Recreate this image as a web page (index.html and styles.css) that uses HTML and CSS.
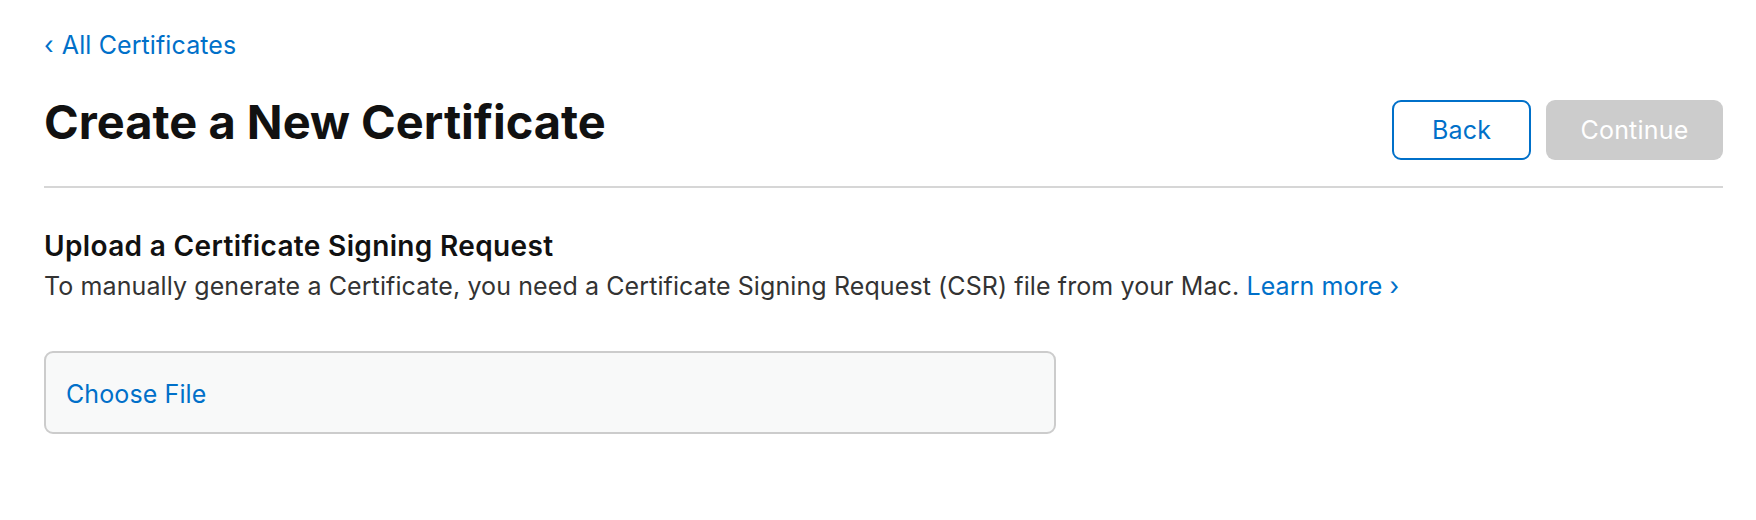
FILE: index.html
```html
<!DOCTYPE html>
<html lang="en">
<head>
<meta charset="utf-8">
<title>Create a New Certificate</title>
<link rel="stylesheet" href="styles.css">
</head>
<body>
<main class="page">
  <nav class="crumb"><a href="#" class="link"><span class="chev">‹</span> All Certificates</a></nav>
  <header class="head">
    <h1 class="title">Create a New Certificate</h1>
    <div class="actions">
      <button class="btn btn-back" type="button">Back</button>
      <button class="btn btn-continue" type="button" disabled>Continue</button>
    </div>
  </header>
  <div class="rule"></div>
  <section class="upload">
    <h2 class="subtitle">Upload a Certificate Signing Request</h2>
    <p class="desc">To manually generate a Certificate, you need a Certificate Signing Request (CSR) file from your Mac. <a href="#" class="link">Learn more ›</a></p>
    <div class="filebox"><span class="link">Choose File</span></div>
  </section>
</main>
</body>
</html>
```
FILE: styles.css
```css
html, body {
  margin: 0;
  padding: 0;
  background: #fff;
}
body {
  font-family: Inter, "Noto Sans", "Liberation Sans", sans-serif;
  color: #333;
}
.page {
  padding: 30px 33px 0 44px;
}
.link {
  color: #0070c9;
  text-decoration: none;
}
.crumb {
  font-size: 25px;
  line-height: 30px;
  height: 30px;
  letter-spacing: 0.1px;
}
.chev {
  display: inline-block;
  margin-right: 1px;
}
.head {
  display: flex;
  justify-content: space-between;
  align-items: flex-start;
  margin-top: 32px;
}
.title {
  margin: 0;
  font-size: 47px;
  line-height: 60px;
  font-weight: 700;
  color: #111;
}
.actions {
  display: flex;
  gap: 15px;
  margin-top: 8px;
}
.btn {
  font-family: inherit;
  font-size: 25px;
  letter-spacing: 0.2px;
  height: 60px;
  border-radius: 9px;
  cursor: pointer;
  padding: 0;
}
.btn-back {
  width: 139px;
  background: #fff;
  color: #0070c9;
  border: 2px solid #0070c9;
}
.btn-continue {
  width: 177px;
  background: #ccc;
  color: #fff;
  border: none;
}
.rule {
  height: 2px;
  background: #d6d6d6;
  margin-top: 26px;
}
.upload {
  padding-top: 42px;
}
.subtitle {
  margin: 0 0 5px;
  font-size: 28px;
  line-height: 32px;
  font-weight: 600;
  letter-spacing: 0.35px;
  color: #111;
}
.desc {
  margin: 0;
  font-size: 25px;
  line-height: 38px;
  letter-spacing: 0.1px;
}
.filebox {
  margin-top: 46px;
  box-sizing: border-box;
  width: 1012px;
  height: 83px;
  border: 2px solid #ccc;
  border-radius: 9px;
  background: #f8f9f9;
  padding: 26px 20px 0;
  font-size: 25px;
  line-height: 30px;
  letter-spacing: 0.1px;
}
```
